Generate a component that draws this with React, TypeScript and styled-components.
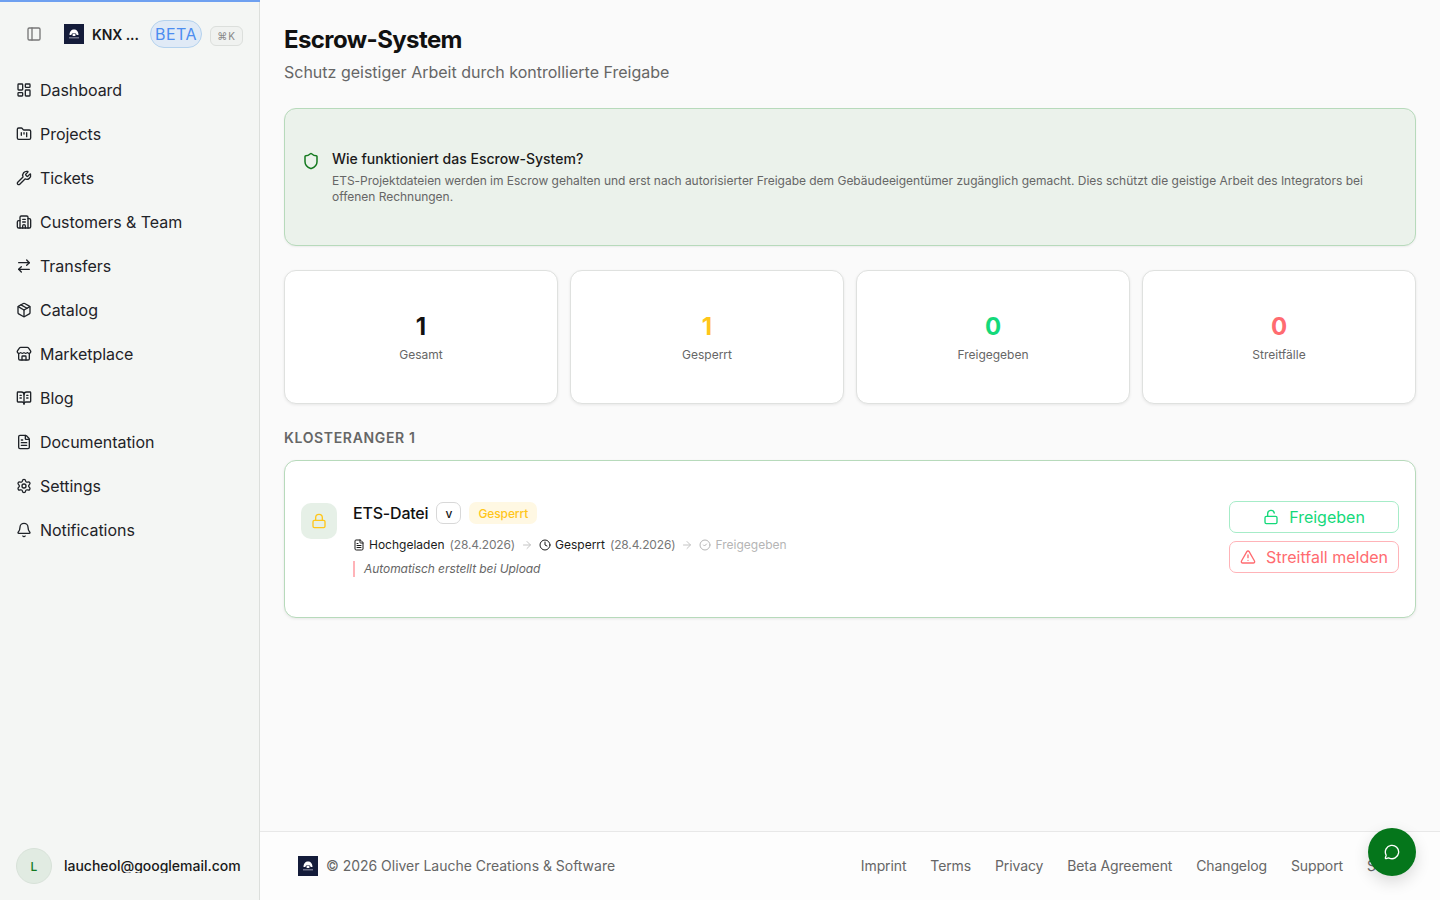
import { createGlobalStyle, styled } from "styled-components";
import {
  ArrowRight,
  ArrowRightLeft,
  Bell,
  BookOpenText,
  Building2,
  CircleCheck,
  Clock,
  FileText,
  FolderKanban,
  LayoutDashboard,
  Lock,
  LockOpen,
  MessageCircle,
  Package,
  PanelLeft,
  Settings,
  Shield,
  Store,
  TriangleAlert,
  Wrench,
} from "lucide-react";

const GlobalStyle = createGlobalStyle`
  * {
    box-sizing: border-box;
  }

  html, body {
    margin: 0;
    height: 100%;
    overflow: hidden;
    background: #fafafa;
    font-family: Inter, "Noto Sans", sans-serif;
    color: #1a1a1a;
  }
`;

const Shell = styled.div`
  display: flex;
  width: 1440px;
  height: 900px;
`;

const Sidebar = styled.aside`
  position: relative;
  flex: 0 0 260px;
  display: flex;
  flex-direction: column;
  background: #f4f6f4;
  border-right: 1px solid #dcdfdc;
`;

const ProgressLine = styled.div`
  position: absolute;
  top: 0;
  left: 0;
  right: -1px;
  height: 2px;
  background: #6ea0f0;
`;

const SidebarHead = styled.div`
  display: flex;
  align-items: center;
  height: 68px;
  padding-left: 26px;
`;

const Toggle = styled.span`
  display: flex;
  color: #777;
  margin-right: 22px;
`;

const BrandName = styled.span`
  margin-left: 8px;
  width: 48px;
  font-size: 14px;
  font-weight: 600;
  white-space: nowrap;
  letter-spacing: -0.1px;
`;

const BetaBadge = styled.span`
  margin-left: 10px;
  height: 28px;
  padding: 0 4px;
  display: flex;
  align-items: center;
  border: 1px solid #b4d2ee;
  border-radius: 14px;
  background: #e0eaf6;
  color: #4c8df0;
  font-size: 16px;
  letter-spacing: 0.5px;
`;

const Kbd = styled.span`
  margin: 4px 0 0 8px;
  height: 20px;
  width: 33px;
  display: flex;
  align-items: center;
  justify-content: center;
  border: 1px solid #dcdfdc;
  border-radius: 6px;
  background: #f0f2f0;
  color: #888;
  font-size: 10px;
  letter-spacing: 1px;
`;

const Nav = styled.nav`
  display: flex;
  flex-direction: column;
`;

const NavItem = styled.a`
  display: flex;
  align-items: center;
  gap: 8px;
  height: 44px;
  padding-left: 16px;
  font-size: 16px;
  letter-spacing: -0.05px;
  color: #1f2328;

  svg {
    flex: none;
  }
`;

const SidebarUser = styled.div`
  margin-top: auto;
  display: flex;
  align-items: center;
  gap: 12px;
  padding: 0 0 16px 16px;
`;

const Avatar = styled.span`
  width: 36px;
  height: 36px;
  border-radius: 50%;
  border: 1px solid #d8e2d9;
  background: #e1ebe2;
  color: #14791f;
  display: flex;
  align-items: center;
  justify-content: center;
  font-size: 12px;
  font-weight: 500;
`;

const UserMail = styled.span`
  display: block;
  height: 15px;
  overflow: hidden;
  margin-top: -1px;
  font-size: 14px;
  line-height: 15px;
  font-weight: 500;
  letter-spacing: -0.02px;
`;

const Column = styled.div`
  flex: 1;
  min-width: 0;
  display: flex;
  flex-direction: column;
`;

const Main = styled.main`
  flex: 1;
  padding: 24px 24px 0;
`;

const Title = styled.h1`
  margin: 0;
  font-size: 24px;
  line-height: 32px;
  font-weight: 700;
  letter-spacing: -0.6px;
  color: #111;
`;

const Subtitle = styled.p`
  margin: 4px 0 0;
  font-size: 16px;
  line-height: 24px;
  color: #666;
`;

const InfoCard = styled.section`
  margin-top: 24px;
  height: 138px;
  display: flex;
  align-items: center;
  padding: 0 17px;
  background: #ebf2eb;
  border: 1px solid #b7dabb;
  border-radius: 12px;
  box-shadow: 0 1px 2px rgba(0, 0, 0, 0.06);
`;

const InfoRow = styled.div`
  display: flex;
  align-items: flex-start;
  gap: 12px;
  color: #14791f;

  svg {
    flex: none;
    margin-top: 3px;
  }
`;

const InfoTitle = styled.div`
  font-size: 14px;
  line-height: 20px;
  font-weight: 500;
  color: #1a1a1a;
`;

const InfoText = styled.div`
  margin-top: 4px;
  font-size: 12px;
  line-height: 16px;
  letter-spacing: -0.02px;
  color: #666;
`;

const StatGrid = styled.div`
  margin-top: 24px;
  display: grid;
  grid-template-columns: repeat(4, 1fr);
  gap: 12px;
`;

const StatCard = styled.div`
  height: 134px;
  display: flex;
  flex-direction: column;
  align-items: center;
  justify-content: center;
  background: #fff;
  border: 1px solid #dfe1df;
  border-radius: 12px;
  box-shadow: 0 1px 3px rgba(0, 0, 0, 0.08);
`;

const StatValue = styled.div<{ $color: string }>`
  font-size: 24px;
  line-height: 32px;
  font-weight: 700;
  color: ${(props) => props.$color};
`;

const StatLabel = styled.div`
  margin-top: 4px;
  font-size: 12px;
  line-height: 16px;
  color: #666;
`;

const SectionLabel = styled.h2`
  margin: 24px 0 12px;
  font-size: 14px;
  line-height: 20px;
  font-weight: 600;
  letter-spacing: 0.65px;
  text-transform: uppercase;
  color: #666;
`;

const FileCard = styled.section`
  height: 158px;
  display: flex;
  align-items: center;
  padding: 0 16px;
  background: #fff;
  border: 1px solid #b7dabb;
  border-radius: 12px;
  box-shadow: 0 1px 3px rgba(0, 0, 0, 0.08);
`;

const FileRow = styled.div`
  flex: 1;
  display: flex;
  align-items: flex-start;
  justify-content: space-between;
`;

const FileMain = styled.div`
  display: flex;
  gap: 16px;
`;

const LockBox = styled.div`
  width: 36px;
  height: 36px;
  margin-top: 2px;
  border-radius: 10px;
  background: #e6f0e7;
  color: #ffc61a;
  display: flex;
  align-items: center;
  justify-content: center;
`;

const FileHead = styled.div`
  display: flex;
  align-items: center;
  gap: 8px;
`;

const FileName = styled.span`
  font-size: 16px;
  line-height: 24px;
  font-weight: 500;
  letter-spacing: -0.2px;
  color: #111;
`;

const VersionTag = styled.span`
  width: 25px;
  height: 22px;
  border: 1px solid #d8d8d8;
  border-radius: 7px;
  display: flex;
  align-items: center;
  justify-content: center;
  font-size: 12px;
  font-weight: 500;
`;

const StatusTag = styled.span`
  height: 22px;
  padding: 0 9px;
  border-radius: 7px;
  background: #fff8e3;
  color: #ffc61a;
  display: flex;
  align-items: center;
  font-size: 12px;
  font-weight: 500;
  letter-spacing: -0.1px;
`;

const Timeline = styled.div`
  margin-top: 12px;
  height: 16px;
  display: flex;
  align-items: center;
  gap: 6px;
  font-size: 12px;
  line-height: 16px;
`;

const Step = styled.span<{ $muted?: boolean }>`
  display: flex;
  align-items: center;
  gap: 4px;
  color: ${(props) => (props.$muted ? "#b5b5b5" : "#1a1a1a")};
`;

const StepDate = styled.span`
  margin-left: 1px;
  letter-spacing: -0.15px;
  color: #777;
`;

const StepArrow = styled.span`
  display: flex;
  color: #c4c4c4;
`;

const Note = styled.div`
  margin-top: 8px;
  padding-left: 9px;
  border-left: 2px solid #ffb3b8;
  font-size: 12px;
  line-height: 16px;
  font-style: italic;
  letter-spacing: -0.06px;
  color: #666;
`;

const Actions = styled.div`
  width: 170px;
  display: flex;
  flex-direction: column;
  gap: 8px;
`;

const ActionButton = styled.button<{ $color: string; $border: string }>`
  height: 32px;
  display: flex;
  align-items: center;
  justify-content: center;
  gap: 10px;
  padding: 0;
  background: #fff;
  border: 1px solid ${(props) => props.$border};
  border-radius: 7px;
  font-family: inherit;
  font-size: 16px;
  color: ${(props) => props.$color};
`;

const Footer = styled.footer`
  position: relative;
  height: 69px;
  display: flex;
  align-items: center;
  justify-content: space-between;
  padding: 0 32px 1px 38px;
  background: #fdfdfd;
  border-top: 1px solid #e8e8e8;
  font-size: 14px;
  color: #666;
`;

const FooterBrand = styled.div`
  display: flex;
  align-items: center;
  gap: 8px;
  letter-spacing: -0.02px;
`;

const FooterLinks = styled.div`
  display: flex;
  gap: 24px;
  letter-spacing: -0.12px;
`;

const ChatButton = styled.button`
  position: absolute;
  right: 24px;
  bottom: 24px;
  width: 48px;
  height: 48px;
  padding: 0;
  border: none;
  border-radius: 50%;
  background: #05761b;
  color: #fff;
  display: flex;
  align-items: center;
  justify-content: center;
  box-shadow: 0 6px 16px rgba(0, 0, 0, 0.14);
`;

const Logo = ({ size }: { size: number }) => (
  <svg width={size} height={size} viewBox="0 0 20 20">
    <rect width="20" height="20" fill="#141c3a" />
    <path
      d="M5.5 11 C5.5 7.5 7.5 5.5 10 5.5 S14.5 7.5 14.5 11 L12.6 11 C12.6 9.8 11.5 8.9 10 8.9 S7.4 9.8 7.4 11 Z"
      fill="#fff"
    />
    <rect x="8.6" y="9.6" width="2.8" height="2.4" fill="#fff" />
    <rect x="5" y="13.4" width="10" height="0.9" fill="#aab" />
  </svg>
);

const navItems = [
  { label: "Dashboard", icon: LayoutDashboard },
  { label: "Projects", icon: FolderKanban },
  { label: "Tickets", icon: Wrench },
  { label: "Customers & Team", icon: Building2 },
  { label: "Transfers", icon: ArrowRightLeft },
  { label: "Catalog", icon: Package },
  { label: "Marketplace", icon: Store },
  { label: "Blog", icon: BookOpenText },
  { label: "Documentation", icon: FileText },
  { label: "Settings", icon: Settings },
  { label: "Notifications", icon: Bell },
];

const stats = [
  { value: "1", label: "Gesamt", color: "#111" },
  { value: "1", label: "Gesperrt", color: "#ffc61a" },
  { value: "0", label: "Freigegeben", color: "#14d97a" },
  { value: "0", label: "Streitfälle", color: "#ff6b70" },
];

const footerLinks = [
  "Imprint",
  "Terms",
  "Privacy",
  "Beta Agreement",
  "Changelog",
  "Support",
  "Status",
];

const App = () => {
  return (
    <Shell>
      <GlobalStyle />
      <Sidebar>
        <ProgressLine />
        <SidebarHead>
          <Toggle>
            <PanelLeft size={16} />
          </Toggle>
          <Logo size={20} />
          <BrandName>KNX ...</BrandName>
          <BetaBadge>BETA</BetaBadge>
          <Kbd>⌘K</Kbd>
        </SidebarHead>
        <Nav>
          {navItems.map((item) => (
            <NavItem key={item.label}>
              <item.icon size={16} />
              {item.label}
            </NavItem>
          ))}
        </Nav>
        <SidebarUser>
          <Avatar>L</Avatar>
          <UserMail>laucheol@googlemail.com</UserMail>
        </SidebarUser>
      </Sidebar>
      <Column>
        <Main>
          <Title>Escrow-System</Title>
          <Subtitle>Schutz geistiger Arbeit durch kontrollierte Freigabe</Subtitle>
          <InfoCard>
            <InfoRow>
              <Shield size={18} />
              <div>
                <InfoTitle>Wie funktioniert das Escrow-System?</InfoTitle>
                <InfoText>
                  ETS-Projektdateien werden im Escrow gehalten und erst nach
                  autorisierter Freigabe dem Gebäudeeigentümer zugänglich gemacht.
                  Dies schützt die geistige Arbeit des Integrators bei offenen
                  Rechnungen.
                </InfoText>
              </div>
            </InfoRow>
          </InfoCard>
          <StatGrid>
            {stats.map((stat) => (
              <StatCard key={stat.label}>
                <StatValue $color={stat.color}>{stat.value}</StatValue>
                <StatLabel>{stat.label}</StatLabel>
              </StatCard>
            ))}
          </StatGrid>
          <SectionLabel>Klosteranger 1</SectionLabel>
          <FileCard>
            <FileRow>
              <FileMain>
                <LockBox>
                  <Lock size={16} />
                </LockBox>
                <div>
                  <FileHead>
                    <FileName>ETS-Datei</FileName>
                    <VersionTag>v</VersionTag>
                    <StatusTag>Gesperrt</StatusTag>
                  </FileHead>
                  <Timeline>
                    <Step>
                      <FileText size={12} />
                      Hochgeladen <StepDate>(28.4.2026)</StepDate>
                    </Step>
                    <StepArrow>
                      <ArrowRight size={12} />
                    </StepArrow>
                    <Step>
                      <Clock size={12} />
                      Gesperrt <StepDate>(28.4.2026)</StepDate>
                    </Step>
                    <StepArrow>
                      <ArrowRight size={12} />
                    </StepArrow>
                    <Step $muted>
                      <CircleCheck size={12} />
                      Freigegeben
                    </Step>
                  </Timeline>
                  <Note>Automatisch erstellt bei Upload</Note>
                </div>
              </FileMain>
              <Actions>
                <ActionButton $color="#14d97a" $border="#a6ecc8">
                  <LockOpen size={16} />
                  Freigeben
                </ActionButton>
                <ActionButton $color="#ff6b70" $border="#ffb3b8">
                  <TriangleAlert size={16} />
                  Streitfall melden
                </ActionButton>
              </Actions>
            </FileRow>
          </FileCard>
        </Main>
        <Footer>
          <FooterBrand>
            <Logo size={20} />
            © 2026 Oliver Lauche Creations &amp; Software
          </FooterBrand>
          <FooterLinks>
            {footerLinks.map((link) => (
              <span key={link}>{link}</span>
            ))}
          </FooterLinks>
          <ChatButton>
            <MessageCircle size={16} />
          </ChatButton>
        </Footer>
      </Column>
    </Shell>
  );
};

export default App;
